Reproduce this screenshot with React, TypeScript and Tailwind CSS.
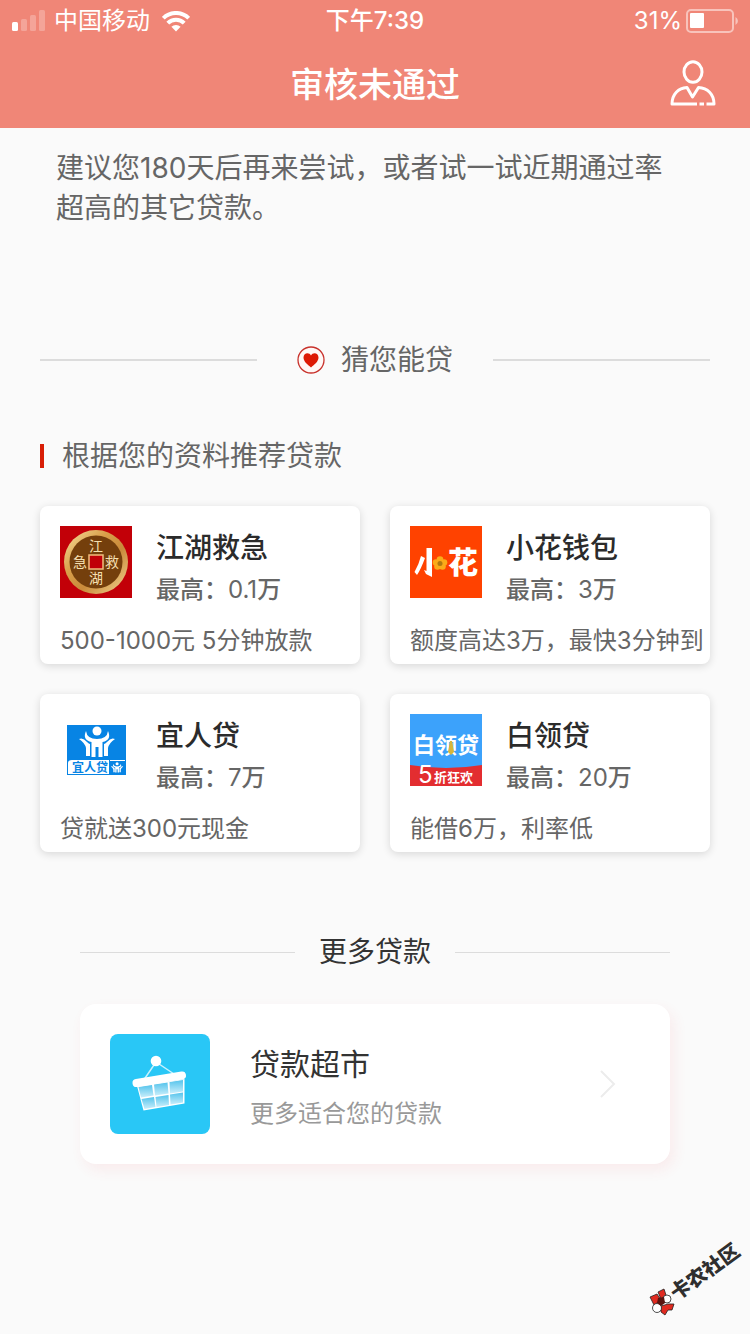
import type { ReactNode } from 'react';

type Loan = {
  name: string;
  max: number;
  desc: string;
  logo: ReactNode;
};

const CJK = '"Noto Sans CJK SC", sans-serif';

function SignalIcon() {
  return (
    <svg width="34" height="22" viewBox="0 0 34 22" fill="#fff" aria-hidden="true">
      <rect x="0" y="12" width="6" height="9" rx="1.5" />
      <rect x="9" y="9" width="6" height="12" rx="1.5" opacity="0.25" />
      <rect x="18" y="5" width="6" height="16" rx="1.5" opacity="0.25" />
      <rect x="27" y="0" width="6" height="21" rx="1.5" opacity="0.25" />
    </svg>
  );
}

function WifiIcon() {
  return (
    <svg width="28" height="21" viewBox="0 0 28 21" aria-hidden="true">
      <g fill="none" stroke="#fff" strokeWidth="4">
        <path d="M1.3 7.2 a18 18 0 0 1 25.4 0" />
        <path d="M5.8 12.2 a11.6 11.6 0 0 1 16.4 0" />
      </g>
      <path d="M9.4 15.8 a6.5 6.5 0 0 1 9.2 0 L14 20.6 Z" fill="#fff" />
    </svg>
  );
}

function BatteryIcon() {
  return (
    <svg width="54" height="24" viewBox="0 0 54 24" aria-hidden="true">
      <rect x="1" y="1" width="46" height="22" rx="4" fill="none" stroke="#fff" strokeOpacity="0.5" strokeWidth="2" />
      <rect x="4" y="4" width="14" height="15" rx="1" fill="#fff" />
      <path d="M49.5 8 a4.5 4.5 0 0 1 0 8 Z" fill="#fff" fillOpacity="0.5" />
    </svg>
  );
}

function UserIcon() {
  return (
    <svg width="46" height="48" viewBox="0 0 46 48" fill="none" stroke="#fff" strokeWidth="3" strokeLinejoin="round" aria-hidden="true">
      <ellipse cx="23" cy="12" rx="9" ry="10.3" />
      <path d="M27 44 H2 C2 34 8.500 28 17 27.500 L22.500 37 L28.500 27.500 C37.500 28 44 34 44 44 H36.500" />
      <path d="M29.500 44 H34" />
    </svg>
  );
}

function HeartBadge() {
  return (
    <svg width="28" height="28" viewBox="0 0 28 28" aria-hidden="true">
      <circle cx="14" cy="14" r="13" fill="#fff8f6" stroke="#c8322c" strokeWidth="1.3" />
      <path d="M14 21.500 C10.500 18.500 6.500 15.500 6.500 11.500 C6.500 8.800 8.500 7.300 10.400 7.300 C12 7.300 13.200 8 14 9.400 C14.800 8 16 7.300 17.600 7.300 C19.500 7.300 21.500 8.800 21.500 11.500 C21.500 15.500 17.500 18.500 14 21.500 Z" fill="#dd1a05" />
    </svg>
  );
}

function JianghuLogo() {
  return (
    <svg width="72" height="72" viewBox="0 0 72 72" aria-hidden="true">
      <defs>
        <linearGradient id="coinRim" x1="0" y1="0" x2="1" y2="1">
          <stop offset="0" stopColor="#f7e0a0" />
          <stop offset="0.35" stopColor="#d9a04a" />
          <stop offset="0.6" stopColor="#c98a3a" />
          <stop offset="1" stopColor="#f3d693" />
        </linearGradient>
      </defs>
      <rect width="72" height="72" fill="#c20008" />
      <circle cx="36" cy="36" r="32" fill="url(#coinRim)" />
      <circle cx="36" cy="36" r="26.500" fill="#743f0c" />
      <rect x="29" y="29" width="14" height="14" fill="#c00008" stroke="#f0bd7c" strokeWidth="1.5" />
      <g fill="#f5dfb0" fontFamily={CJK} fontSize="14" textAnchor="middle">
        <text x="36" y="25">江</text>
        <text x="36" y="57">湖</text>
        <text x="20" y="41">急</text>
        <text x="52" y="41">救</text>
      </g>
    </svg>
  );
}

function XiaohuaLogo() {
  return (
    <svg width="72" height="72" viewBox="0 0 72 72" aria-hidden="true">
      <rect width="72" height="72" fill="#ff4200" />
      <g fill="#fff">
        <path d="M11 30 L15 32 Q11 43 7 49 L4.500 46 Q9 38 11 30 Z" />
        <path d="M16.500 22 H22 V51 L16 48 L14 44 L16.500 45 Z" />
      </g>
      <g fill="#fbab18">
        <circle cx="30" cy="33.500" r="3.300" />
        <circle cx="34" cy="36.500" r="3.300" />
        <circle cx="32.500" cy="40.500" r="3.300" />
        <circle cx="27.500" cy="40.500" r="3.300" />
        <circle cx="26" cy="36.500" r="3.300" />
      </g>
      <circle cx="30" cy="37.500" r="2.500" fill="#b07a10" />
      <text x="53" y="47" fill="#fff" fontFamily={CJK} fontSize="30" fontWeight="900" textAnchor="middle">花</text>
    </svg>
  );
}

function YirenFigures() {
  return (
    <g>
      <circle cx="37" cy="17" r="4.500" />
      <path d="M26 17 Q27 25 37 25 Q47 25 48 17 Q52 26 42.500 28 V43 H38.500 V33 H35.500 V43 H31.500 V28 Q22 26 26 17 Z" />
      <path d="M19 25 Q23 23 27 28 Q29 30 30 30 V42 H26 V34 Q25 29 19 25 Z" />
      <path d="M55 25 Q51 23 47 28 Q45 30 44 30 V42 H48 V34 Q49 29 55 25 Z" />
    </g>
  );
}

function YirenLogo() {
  return (
    <svg width="72" height="72" viewBox="0 0 72 72" aria-hidden="true">
      <rect x="7" y="11" width="59" height="50" fill="#0784e4" />
      <g fill="#fff">
        <YirenFigures />
      </g>
      <path d="M8 60 V49 Q8 46 12 46 H49 V60 Z" fill="#fff" />
      <text x="30" y="58" fill="#0784e4" fontFamily={CJK} fontSize="12" fontWeight="700" textAnchor="middle">宜人贷</text>
      <g fill="#fff" transform="translate(44.500 44) scale(0.340)">
        <YirenFigures />
      </g>
      <path d="M50 46.500 H65" stroke="#fff" strokeWidth="1" />
    </svg>
  );
}

function BailingLogo() {
  return (
    <svg width="72" height="72" viewBox="0 0 72 72" className="overflow-visible" aria-hidden="true">
      <rect width="72" height="72" fill="#3ca2fb" />
      <path d="M0 51 Q36 57 72 51 V72 H0 Z" fill="#e32d30" />
      <text x="36" y="39" fill="#fff" fontFamily={CJK} fontSize="22" fontWeight="700" textAnchor="middle">白领贷</text>
      <path d="M40 27 L42 27 L44 38 L41 41 L38 38 Z" fill="#d8b63a" />
      <text x="8" y="69" fill="#fff" fontFamily="Inter, sans-serif" fontSize="24">5</text>
      <text x="24" y="68" fill="#fff" fontFamily={CJK} fontSize="13" fontWeight="700">折狂欢</text>
    </svg>
  );
}

function BasketIcon() {
  return (
    <svg width="100" height="100" viewBox="0 0 100 100" className="rounded-lg" aria-hidden="true">
      <defs>
        <linearGradient id="basketFill" x1="0" y1="0" x2="0" y2="1">
          <stop offset="0" stopColor="#55c4ec" />
          <stop offset="1" stopColor="#c9eefb" />
        </linearGradient>
      </defs>
      <rect width="100" height="100" fill="#29c7f6" />
      <path d="M31 50 L46 28 L70 44" fill="none" stroke="#c8f1fd" strokeWidth="1.5" />
      <circle cx="46" cy="27" r="5.300" fill="#fff" />
      <path d="M27 52 L74.500 45 L74.500 69.500 L33.500 76.500 Z" fill="#fff" />
      <g fill="url(#basketFill)">
        <path d="M28.500 53 L42 51 L43.500 61.500 L31 63.500 Z" />
        <path d="M44 50.500 L57.500 48.500 L58.500 59.500 L45 61.500 Z" />
        <path d="M59.500 48 L73 46 L73 57.500 L60 59.500 Z" />
        <path d="M31.500 65 L44 63 L45.500 73 L34.500 75 Z" />
        <path d="M45.500 63 L58.500 61 L59 71 L46.500 73 Z" />
        <path d="M60 60.500 L73 58.500 L73 68.500 L60.500 70.500 Z" />
      </g>
      <path d="M26.500 49 L72 41.500" stroke="#fff" strokeWidth="8" strokeLinecap="round" />
    </svg>
  );
}

function ChevronIcon() {
  return (
    <svg width="16" height="28" viewBox="0 0 16 28" fill="none" stroke="#ececec" strokeWidth="2" aria-hidden="true">
      <path d="M1 1 L14 14 L1 27" />
    </svg>
  );
}

function CommunityMark() {
  return (
    <svg width="110" height="100" viewBox="0 0 110 100" className="pointer-events-none absolute right-0 bottom-0" role="img" aria-label="卡农社区">
      <g stroke="#222" strokeWidth="0.800">
        <path d="M10 63 L17 60 L21 66 L14 71 Z" fill="#e02a20" />
        <path d="M18 58 L24 55 L26 61 L21 65 Z" fill="#e02a20" />
        <path d="M21 72 L28 70 L34 70 L32 76 L28 76 L25 81 L21 78 Z" fill="#e02a20" />
        <circle cx="27" cy="65" r="4" fill="#fff" />
        <circle cx="17" cy="74" r="4.500" fill="#fff" />
      </g>
      <path d="M18 64 L24 63 L25 69 L21 72 L17 69 Z" fill="#5a1510" />
      <g transform="translate(22 69) rotate(-36)">
        <text x="13" y="7" fill="#2f2f2f" fontFamily={CJK} fontSize="20" fontWeight="900">卡农社区</text>
      </g>
    </svg>
  );
}

const loans: Loan[] = [
  { name: '江湖救急', max: 0.1, desc: '500-1000元 5分钟放款', logo: <JianghuLogo /> },
  { name: '小花钱包', max: 3, desc: '额度高达3万，最快3分钟到', logo: <XiaohuaLogo /> },
  { name: '宜人贷', max: 7, desc: '贷就送300元现金', logo: <YirenLogo /> },
  { name: '白领贷', max: 20, desc: '能借6万，利率低', logo: <BailingLogo /> },
];

function LoanCard({ loan }: { loan: Loan }) {
  return (
    <a href="#" className="block min-w-0 rounded-lg bg-white pt-5 pb-0.5 pl-5 shadow-[0_2px_8px_rgba(0,0,0,0.14)]">
      <div className="flex gap-6">
        {loan.logo}
        <div>
          <h3 className="text-[28px] leading-11 font-medium text-[#2b2b2b]">{loan.name}</h3>
          <p className="text-2xl leading-10 font-medium">
            最高：<span className="font-normal">{loan.max}</span>万
          </p>
        </div>
      </div>
      <p className="mt-2.5 text-2xl leading-[42px] whitespace-nowrap">{loan.desc}</p>
    </a>
  );
}

export default function App() {
  return (
    <div className="relative min-h-screen bg-[#fafafa] font-['Inter','Noto_Sans_CJK_SC',sans-serif] text-[#666]">
      <header className="bg-[#f08677] text-white">
        <div className="grid h-10 grid-cols-3 items-center px-3 pt-0.5 text-2xl leading-9">
          <div className="flex items-center gap-2">
            <SignalIcon />
            <span>中国移动</span>
            <span className="ml-1"><WifiIcon /></span>
          </div>
          <time className="text-center font-medium">下午7:39</time>
          <div className="-mr-0.5 flex items-center justify-end gap-1">
            <span>31%</span>
            <BatteryIcon />
          </div>
        </div>
        <div className="grid h-[88px] grid-cols-[80px_1fr_80px] items-center px-[34px]">
          <h1 className="col-start-2 text-center text-[34px] font-medium">审核未通过</h1>
          <button type="button" aria-label="个人中心" className="justify-self-end">
            <UserIcon />
          </button>
        </div>
      </header>

      <main className="px-10">
        <p className="pt-5 pr-8 pl-4 text-[28px] leading-10">
          建议您180天后再来尝试，或者试一试近期通过率超高的其它贷款。
        </p>

        <div className="mt-28 flex items-center gap-10">
          <span className="h-0.5 flex-1 bg-[#dcdcdc]" />
          <h2 className="flex items-center gap-4 text-[28px] leading-10">
            <HeartBadge />
            猜您能贷
          </h2>
          <span className="h-0.5 flex-1 bg-[#dcdcdc]" />
        </div>

        <section className="mt-14">
          <div className="flex items-center gap-[18px]">
            <span className="h-6 w-1 bg-[#d81e06]" />
            <h2 className="text-[28px] leading-10">根据您的资料推荐贷款</h2>
          </div>
          <div className="mt-[30px] grid grid-cols-2 gap-[30px]">
            {loans.map((loan) => (
              <LoanCard key={loan.name} loan={loan} />
            ))}
          </div>
        </section>

        <section className="mt-20 px-10">
          <div className="flex items-center gap-6">
            <span className="h-px flex-1 bg-[#dcdcdc]" />
            <h2 className="text-[28px] leading-10 text-[#333]">更多贷款</h2>
            <span className="h-px flex-1 bg-[#dcdcdc]" />
          </div>
          <a href="#" className="mt-8 flex items-center gap-10 rounded-2xl bg-white p-[30px] shadow-[4px_6px_14px_rgba(240,60,80,0.08)]">
            <BasketIcon />
            <div className="flex-1 pt-2.5">
              <h3 className="text-3xl leading-10 text-[#333]">贷款超市</h3>
              <p className="mt-2.5 text-2xl leading-10 text-[#999]">更多适合您的贷款</p>
            </div>
            <span className="mr-6"><ChevronIcon /></span>
          </a>
        </section>
      </main>

      <CommunityMark />
    </div>
  );
}
